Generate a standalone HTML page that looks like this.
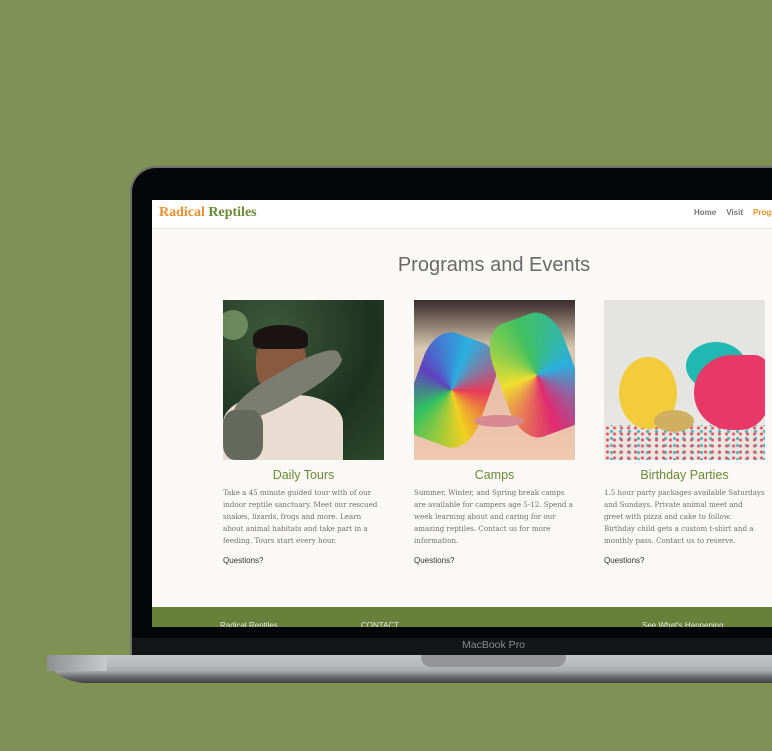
<!DOCTYPE html>
<html><head><meta charset="utf-8">
<style>
*{margin:0;padding:0;box-sizing:border-box}
body{width:772px;height:751px;background:#819155;position:relative;overflow:hidden;font-family:"Liberation Sans",sans-serif}
.lid{position:absolute;left:130px;top:166px;width:700px;height:491px;background:#050607;border-radius:26px 0 0 0;border:2px solid #6e6f70;border-right:none;border-bottom:none}
.chin{position:absolute;left:132px;top:638px;width:640px;height:19px;background:#141517;border-radius:0 0 0 6px}
.chin span{position:absolute;left:330px;top:1px;color:#8a8b8d;font-size:10.5px}
.base{position:absolute;left:47px;top:655px;width:740px;height:28px;background:linear-gradient(#c4c5c7 0px,#b8b9bb 10px,#a9aaac 16px,#6a6b6d 22px,#3f4042 28px);border-radius:0 0 0 40px/0 0 0 28px}
.base:before{content:"";position:absolute;left:0;top:0;width:60px;height:16px;background:linear-gradient(90deg,#8f9092,#c8c9cb)}
.notch{position:absolute;left:421px;top:655px;width:145px;height:12px;background:#959597;border-radius:0 0 10px 10px}
.screen{position:absolute;left:152px;top:200px;width:620px;height:427px;background:#faf9f6;overflow:hidden}
.nav{height:29px;background:#fff;border-bottom:1px solid #e6e6e6;position:relative}
.logo{position:absolute;left:7px;top:5px;font-family:"Liberation Serif",serif;font-weight:bold;font-size:14px;color:#6a8b35}
.logo b{color:#e98f2d}
.links{position:absolute;left:542px;top:8px;font-size:8px;font-weight:bold;color:#777;white-space:nowrap}
.links span{margin-right:10px}
h1{position:absolute;top:54px;left:0;width:684px;text-align:center;font-weight:normal;font-size:20px;color:#6a6a6a;font-family:"Liberation Sans",sans-serif}
.card{position:absolute;top:100px;width:161px}
.img{width:161px;height:160px;position:relative;overflow:hidden}
.card h2{margin-top:8px;text-align:center;font-weight:normal;font-size:12.5px;color:#6a8b35}
.card p{margin-top:5px;font-family:"DejaVu Serif",serif;font-size:7.1px;line-height:12.1px;color:#707070;white-space:nowrap}
.card .q{margin-top:9px;font-size:8px;color:#333}
.foot{position:absolute;left:0;top:407px;width:620px;height:20px;background:#67803a;color:#eef;font-size:8px}
.foot span{position:absolute;top:14px;color:#e8ebe0}
</style></head><body>
<div class="lid"></div>
<div class="chin"><span>MacBook Pro</span></div>
<div class="base"></div>
<div class="notch"></div>
<div class="screen">
 <div class="nav"><div class="logo"><b>Radical</b> Reptiles</div>
  <div class="links"><span>Home</span><span>Visit</span><span style="color:#e98f2d">Programs</span></div></div>
 <h1>Programs and Events</h1>
 <div class="card" style="left:71px">
  <div class="img" style="background:radial-gradient(circle at 30% 20%,#3d5a3a,#1d3220 60%,#2b4a2a)">
   <div style="position:absolute;left:-5px;top:10px;width:30px;height:30px;border-radius:50%;background:#8fb27a;opacity:.6"></div>
   <div style="position:absolute;left:33px;top:30px;width:50px;height:66px;border-radius:45%;background:#8a5a40"></div>
   <div style="position:absolute;left:30px;top:25px;width:55px;height:24px;border-radius:50% 50% 20% 20%;background:#1a1512"></div>
   <div style="position:absolute;left:0;top:95px;width:120px;height:70px;border-radius:40% 40% 0 0;background:#e8ddd0"></div>
   <div style="position:absolute;left:5px;top:70px;width:120px;height:30px;background:#7a7d70;transform:rotate(-30deg);border-radius:40%"></div>
   <div style="position:absolute;left:0;top:110px;width:40px;height:50px;background:#65685c;border-radius:30%"></div>
  </div>
  <h2>Daily Tours</h2>
  <p>Take a 45 minute guided tour with of our<br>indoor reptile sanctuary. Meet our rescued<br>snakes, lizards, frogs and more. Learn<br>about animal habitats and take part in a<br>feeding. Tours start every hour.</p>
  <div class="q">Questions?</div></div>
 <div class="card" style="left:262px">
  <div class="img" style="background:linear-gradient(#3a2a2a,#d8c8b0 30%,#e8c0a8 60%,#f0c8b0)">
   <div style="position:absolute;left:0;top:35px;width:75px;height:110px;border-radius:30%;background:conic-gradient(#2ab0e0,#e83a5a,#f0d020,#30c060,#6040c0,#2ab0e0);transform:rotate(20deg)"></div>
   <div style="position:absolute;left:85px;top:15px;width:76px;height:120px;border-radius:30%;background:conic-gradient(#40c060,#2ab0e0,#e02a70,#f0e030,#40c060);transform:rotate(-20deg)"></div>
   <div style="position:absolute;left:60px;top:115px;width:50px;height:12px;border-radius:50%;background:#d88890"></div>
  </div>
  <h2>Camps</h2>
  <p>Summer, Winter, and Spring break camps<br>are available for campers age 5-12. Spend a<br>week learning about and caring for our<br>amazing reptiles. Contact us for more<br>information.</p>
  <div class="q">Questions?</div></div>
 <div class="card" style="left:452px">
  <div class="img" style="background:linear-gradient(#e4e4e0 60%,#eceae6)">
   <div style="position:absolute;left:0;top:125px;width:161px;height:35px;background:radial-gradient(circle,#e05060 1px,transparent 2px) 0 0/7px 6px,radial-gradient(circle,#40b0c0 1px,transparent 2px) 3px 3px/9px 7px,#ece6e0"></div>
   <div style="position:absolute;left:82px;top:42px;width:60px;height:48px;border-radius:50%;background:#20b8b0"></div>
   <div style="position:absolute;left:90px;top:55px;width:75px;height:75px;border-radius:50% 20% 40% 50%;background:#e83868"></div>
   <div style="position:absolute;left:15px;top:57px;width:58px;height:72px;border-radius:50%;background:#f2cc3a"></div>
   <div style="position:absolute;left:50px;top:110px;width:40px;height:22px;border-radius:50%;background:#d0b060"></div>
  </div>
  <h2>Birthday Parties</h2>
  <p>1.5 hour party packages available Saturdays<br>and Sundays. Private animal meet and<br>greet with pizza and cake to follow.<br>Birthday child gets a custom t-shirt and a<br>monthly pass. Contact us to reserve.</p>
  <div class="q">Questions?</div></div>
 <div class="foot"><span style="left:68px">Radical Reptiles</span><span style="left:209px">CONTACT</span><span style="left:490px">See What's Happening</span></div>
</div>
</body></html>
